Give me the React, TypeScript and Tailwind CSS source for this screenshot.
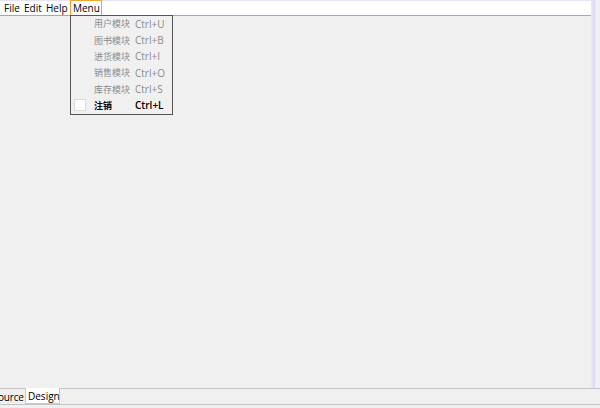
import React from "react";

type Item = {
  label: string;
  shortcut: string;
  enabled?: boolean;
  checkbox?: boolean;
};

const items: Item[] = [
  { label: "用户模块", shortcut: "Ctrl+U" },
  { label: "图书模块", shortcut: "Ctrl+B" },
  { label: "进货模块", shortcut: "Ctrl+I" },
  { label: "销售模块", shortcut: "Ctrl+O" },
  { label: "库存模块", shortcut: "Ctrl+S" },
  { label: "注销", shortcut: "Ctrl+L", enabled: true, checkbox: true },
];

const font = {
  fontFamily: '"Open Sans", "Noto Sans CJK SC", sans-serif',
};

export default function App() {
  return (
    <div
      className="w-[600px] h-[408px] bg-[#f0f0f0] relative overflow-hidden text-[10px] text-black"
      style={font}
    >
      <div className="flex h-[388px]">
        <div className="flex-1 flex flex-col">
          <div className="h-[1px] bg-[#e6e3f7]" />
          <div className="h-[15px] bg-white border-b border-[#a8a8a8] flex items-center leading-none pl-[4px]">
            <span className="w-[20px]">File</span>
            <span className="w-[22px]">Edit</span>
            <span className="w-[24px]">Help</span>
            <span className="-mt-[1px] h-[16px] w-[32px] pl-[2px] flex items-center border-[1.5px] border-[#eda536] bg-white">
              Menu
            </span>
          </div>
          <div className="flex-1" />
        </div>
        <div className="w-[4px] bg-gradient-to-r from-[#ebe8fa] to-[#dcd7f5]" />
        <div className="w-[5px]" />
      </div>

      <div className="border-t border-[#c4c4c4] h-[16px] flex items-end bg-[#f0f0f0] leading-none">
        <span className="h-[15px] w-[27px] flex items-center -ml-[2px] tracking-[-0.2px]">ource</span>
        <span className="h-[16px] w-[35px] flex items-center px-[2px] bg-white border-x border-b border-[#c8c8c8]">
          Design
        </span>
      </div>
      <div className="border-t border-[#c4c4c4] bg-[#f0f0f0] flex-1" />

      <div className="absolute left-[70px] top-[15px] w-[103px] h-[100px] bg-[#f0f0f0] border border-[#555555]">
        {items.map((it) => (
          <div key={it.label} className="h-[16.3px] flex items-center relative">
            {it.checkbox && (
              <span className="absolute left-[3px] top-[2px] w-[12px] h-[12px] bg-white border border-[#dcdcdc]" />
            )}
            <span
              className={
                "absolute left-[23px] text-[9px] " +
                (it.enabled ? "text-black font-semibold" : "text-[#8c8c8c]")
              }
            >
              {it.label}
            </span>
            <span
              className={
                "absolute left-[64px] " +
                (it.enabled ? "text-black font-semibold" : "text-[#8c8c8c]")
              }
            >
              {it.shortcut}
            </span>
          </div>
        ))}
      </div>
    </div>
  );
}
